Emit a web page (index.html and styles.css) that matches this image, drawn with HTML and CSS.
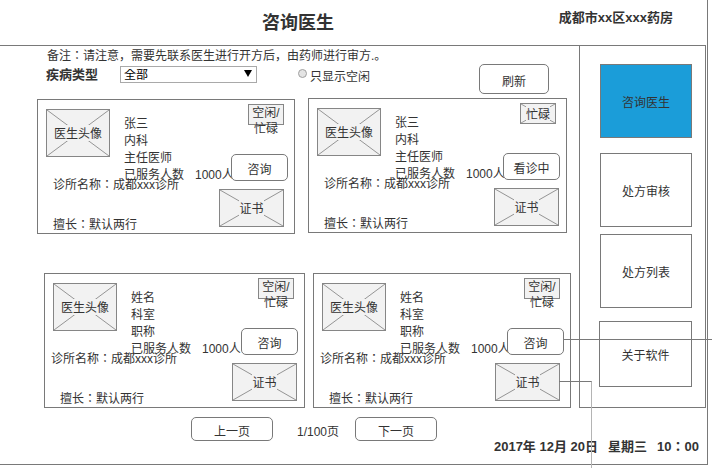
FILE: index.html
```html
<!DOCTYPE html>
<html lang="zh-CN">
<head>
<meta charset="utf-8">
<title>咨询医生</title>
<link rel="stylesheet" href="styles.css">
</head>
<body>
<div class="frame">
  <header class="header">
    <h1 class="title">咨询医生</h1>
    <div class="store">成都市xx区xxx药房</div>
  </header>
  <div class="body">
    <main class="content">
      <p class="note">备注<span class="mid">：</span>请注意，需要先联系医生进行开方后，由药师进行审方.。</p>
      <form class="filters">
        <label class="filter-label" for="disease">疾病类型</label>
        <span class="select-wrap">
          <select class="select" id="disease"><option>全部</option></select>
          <svg class="arrow" viewBox="0 0 8 7"><path d="M0 0H8L4 7Z"/></svg>
        </span>
        <input class="radio" type="radio" id="free">
        <label class="radio-label" for="free">只显示空闲</label>
        <button class="btn refresh" type="button">刷新</button>
      </form>

      <section class="row row-first">
        <article class="card">
          <div class="left">
            <div class="profile">
              <div class="box avatar"><svg class="cross" viewBox="0 0 64 48" preserveAspectRatio="none"><path d="M0 0L64 48M64 0L0 48"/></svg><span class="tag">医生头像</span></div>
              <ul class="info"><li>张三</li><li>内科</li><li>主任医师</li><li>已服务人数<span class="count">1000人</span></li></ul>
            </div>
            <p class="clinic">诊所名称<span class="mid">：</span>成都xxx诊所</p>
            <p class="skill">擅长<span class="mid">：</span>默认两行</p>
          </div>
          <div class="right">
            <div class="box status">空闲/<br>忙碌</div>
            <button class="btn consult" type="button">咨询</button>
            <div class="box cert"><svg class="cross" viewBox="0 0 64 37" preserveAspectRatio="none"><path d="M0 0L64 37M64 0L0 37"/></svg><span class="tag">证书</span></div>
          </div>
        </article>
        <article class="card raised">
          <div class="left">
            <div class="profile">
              <div class="box avatar"><svg class="cross" viewBox="0 0 64 48" preserveAspectRatio="none"><path d="M0 0L64 48M64 0L0 48"/></svg><span class="tag">医生头像</span></div>
              <ul class="info"><li>张三</li><li>内科</li><li>主任医师</li><li>已服务人数<span class="count">1000人</span></li></ul>
            </div>
            <p class="clinic">诊所名称<span class="mid">：</span>成都xxx诊所</p>
            <p class="skill">擅长<span class="mid">：</span>默认两行</p>
          </div>
          <div class="right">
            <div class="box status busy"><svg class="cross" viewBox="0 0 36 21" preserveAspectRatio="none"><path d="M0 0L36 21M36 0L0 21"/></svg><span class="tag">忙碌</span></div>
            <button class="btn consult" type="button">看诊中</button>
            <div class="box cert cert-edge"><svg class="cross" viewBox="0 0 64 37" preserveAspectRatio="none"><path d="M0 0L64 37M64 0L0 37"/></svg><span class="tag">证书</span></div>
          </div>
        </article>
      </section>

      <section class="row row-second">
        <article class="card">
          <div class="left">
            <div class="profile">
              <div class="box avatar"><svg class="cross" viewBox="0 0 64 48" preserveAspectRatio="none"><path d="M0 0L64 48M64 0L0 48"/></svg><span class="tag">医生头像</span></div>
              <ul class="info"><li>姓名</li><li>科室</li><li>职称</li><li>已服务人数<span class="count">1000人</span></li></ul>
            </div>
            <p class="clinic">诊所名称<span class="mid">：</span>成都xxx诊所</p>
            <p class="skill">擅长<span class="mid">：</span>默认两行</p>
          </div>
          <div class="right">
            <div class="box status">空闲/<br>忙碌</div>
            <button class="btn consult" type="button">咨询</button>
            <div class="box cert cert-edge"><svg class="cross" viewBox="0 0 64 37" preserveAspectRatio="none"><path d="M0 0L64 37M64 0L0 37"/></svg><span class="tag">证书</span></div>
          </div>
        </article>
        <article class="card">
          <div class="left">
            <div class="profile">
              <div class="box avatar"><svg class="cross" viewBox="0 0 64 48" preserveAspectRatio="none"><path d="M0 0L64 48M64 0L0 48"/></svg><span class="tag">医生头像</span></div>
              <ul class="info"><li>姓名</li><li>科室</li><li>职称</li><li>已服务人数<span class="count">1000人</span></li></ul>
            </div>
            <p class="clinic">诊所名称<span class="mid">：</span>成都xxx诊所</p>
            <p class="skill">擅长<span class="mid">：</span>默认两行</p>
          </div>
          <div class="right">
            <div class="box status">空闲/<br>忙碌</div>
            <button class="btn consult" type="button">咨询<span class="wire wire-consult"></span></button>
            <div class="box cert"><svg class="cross" viewBox="0 0 64 37" preserveAspectRatio="none"><path d="M0 0L64 37M64 0L0 37"/></svg><span class="tag">证书</span><span class="wire wire-cert"></span></div>
          </div>
        </article>
      </section>
    </main>
    <nav class="sidebar">
      <a class="nav-item active" href="#consult">咨询医生</a>
      <a class="nav-item" href="#review">处方审核</a>
      <a class="nav-item" href="#list">处方列表</a>
      <a class="nav-item about" href="#about">关于软件</a>
    </nav>
  </div>
  <footer class="footer">
    <div class="pager">
      <button class="btn page-btn" type="button">上一页</button>
      <span class="page-num">1/100页</span>
      <button class="btn page-btn" type="button">下一页</button>
    </div>
    <time class="clock"><span>2017年 12月 20日</span><span>星期三</span><span>10<span class="mid">：</span>00</span></time>
  </footer>
</div>
</body>
</html>
```
FILE: styles.css
```css
* {
  box-sizing: border-box;
}

body {
  min-height: 100vh;
  margin: 0;
  overflow: hidden;
  background: #fff;
  color: #333;
  font: 12px/16px "Liberation Sans", "Noto Sans CJK SC", sans-serif;
}

h1, p, ul {
  margin: 0;
  padding: 0;
}

ul {
  list-style: none;
}

/* Colon centred in its em box */
.mid {
  font-family: "Noto Sans CJK TC", sans-serif;
  font-feature-settings: "locl" 0;
  line-height: 1;
}

.frame {
  margin-right: 4px;
  border-right: 1px solid #797979;
  border-bottom: 1px solid #797979;
}

.header {
  display: grid;
  grid-template-columns: 1fr auto;
  height: 45px;
  padding-right: 34px;
}

.title {
  padding: 11px 0 0 37px;
  font-size: 18px;
  line-height: 24px;
  text-align: center;
}

.store {
  padding-top: 10px;
  font-size: 13px;
  font-weight: bold;
}

.body {
  display: flex;
  margin-right: 1px;
  border-top: 1px solid #797979;
}

.content {
  flex: 1;
  min-width: 0;
}

.note {
  height: 18px;
  padding: 2px 0 0 47px;
}

.filters {
  display: flex;
  align-items: flex-start;
  height: 35px;
  padding-left: 46px;
}

.filter-label {
  width: 74px;
  padding-top: 3px;
  font-size: 13px;
  font-weight: bold;
}

.select-wrap {
  position: relative;
  display: flex;
  width: 137px;
  margin-top: 2px;
}

.select {
  width: 100%;
  height: 17px;
  padding: 2px 3px 0;
  appearance: none;
  border: 1px solid #a9a9a9;
  border-radius: 0;
  background: #fff;
  color: #000;
  font: inherit;
  line-height: 13px;
}

.arrow {
  position: absolute;
  top: 4px;
  right: 5px;
  width: 8px;
  height: 7px;
  pointer-events: none;
}

.radio {
  width: 9px;
  height: 9px;
  margin: 5px 3px 0 41px;
  appearance: none;
  border: 1px solid #a0a0a0;
  border-radius: 50%;
  background: #e4e4e4;
}

.radio-label {
  padding-top: 5px;
}

.btn {
  padding: 5px 0 0;
  border: 1px solid #797979;
  border-radius: 5px;
  background: #fff;
  color: #333;
  font: inherit;
}

.refresh {
  width: 70px;
  height: 30px;
  margin: 0 30px 0 auto;
}

.row {
  display: grid;
}

.row-first {
  grid-template-columns: minmax(0, 258fr) minmax(0, 259fr);
  gap: 13px;
  padding: 0 12px 0 37px;
}

.row-second {
  grid-template-columns: minmax(0, 261fr) minmax(0, 258fr);
  gap: 8px;
  margin-top: 39px;
  padding: 0 8px 0 44px;
}

.card {
  display: flex;
  min-width: 0;
  height: 135px;
  border: 1px solid #797979;
}

.raised {
  margin-top: -1px;
}

.left {
  flex: 1;
  min-width: 0;
  padding-top: 9px;
  white-space: nowrap;
}

.profile {
  display: flex;
  gap: 14px;
  height: 68px;
  padding-left: 8px;
}

.info {
  padding-top: 7px;
  line-height: 17px;
}

.count {
  margin-left: 11px;
}

.clinic {
  padding-left: 15px;
}

.row-second .clinic {
  padding-left: 6px;
}

.skill {
  margin-top: 24px;
  padding-left: 15px;
}

.right {
  display: flex;
  flex-direction: column;
  flex-shrink: 0;
  align-items: flex-end;
  width: 72px;
  padding: 4px 6px 0 0;
}

.box {
  position: relative;
  display: flex;
  flex-shrink: 0;
  align-items: center;
  justify-content: center;
  border: 1px solid #868686;
  background: #f2f2f2;
}

.cross {
  position: absolute;
  inset: 0;
  width: 100%;
  height: 100%;
  fill: none;
  stroke: #919191;
}

.tag {
  position: relative;
  padding-top: 2px;
  background: #f2f2f2;
  line-height: 14px;
}

.avatar {
  width: 64px;
  height: 48px;
}

.status {
  align-items: flex-start;
  width: 36px;
  height: 21px;
  margin-right: 4px;
  text-align: center;
}

.busy {
  align-items: center;
}

.consult {
  position: relative;
  flex-shrink: 0;
  width: 57px;
  height: 27px;
  margin-top: 29px;
}

.cert {
  width: 65px;
  height: 38px;
  margin: 8px 4px 0 0;
}

.cert-edge {
  margin-right: 1px;
}

.sidebar {
  display: flex;
  flex-direction: column;
  width: 127px;
  height: 362px;
  padding: 18px 13px 0 20px;
  border: solid #797979;
  border-width: 0 1px 1px;
}

.nav-item {
  display: flex;
  align-items: center;
  justify-content: center;
  height: 74px;
  margin-bottom: 7px;
  padding-top: 4px;
  border: 1px solid #797979;
  color: #333;
  text-decoration: none;
}

.active {
  margin-bottom: 15px;
  background: #1b9dd9;
}

.about {
  height: 66px;
  margin: 6px 0 0 -1px;
}

.wire {
  position: absolute;
  pointer-events: none;
}

.wire-consult {
  top: 10px;
  left: 100%;
  width: 150px;
  border-top: 1px solid #797979;
}

.wire-cert {
  top: 17px;
  left: 100%;
  width: 33px;
  height: 100px;
  border-top: 1px solid #797979;
  border-right: 1px solid #b4b4b4;
}

.footer {
  display: flex;
  justify-content: space-between;
  height: 56px;
  padding: 9px 8px 0 191px;
}

.pager {
  display: flex;
  align-items: flex-start;
}

.page-btn {
  width: 82px;
  height: 24px;
}

.page-num {
  margin: 7px 16px 0 24px;
}

.clock {
  display: flex;
  gap: 10px;
  padding-top: 22px;
  font-size: 13px;
  font-weight: bold;
  white-space: nowrap;
}
```
